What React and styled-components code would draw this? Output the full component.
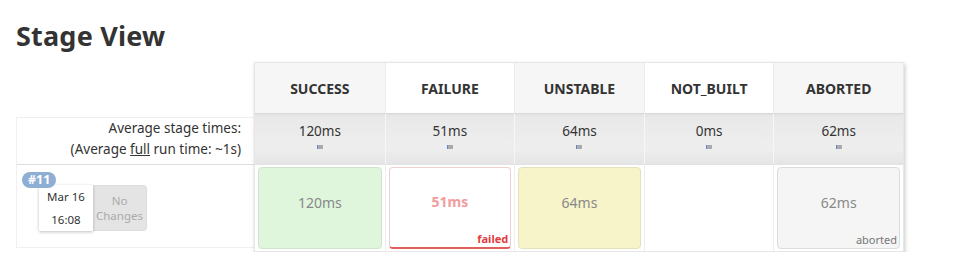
import React from "react";
import styled, { createGlobalStyle } from "styled-components";

const Global = createGlobalStyle`
  html, body { margin: 0; padding: 0; background: #fff; }
  body { font-family: "Noto Sans", "Open Sans", sans-serif; color: #333; }
`;

const Page = styled.div`
  padding: 20px 0 0 16px;
`;

const Title = styled.h1`
  margin: 0 0 10px 0;
  font-size: 27px;
  line-height: 32px;
  font-weight: 700;
  color: #333;
  letter-spacing: 0.2px;
`;

const Layout = styled.div`
  display: flex;
  align-items: flex-start;
`;

const LeftCol = styled.div`
  width: 238px;
  padding-top: 55px;
  flex-shrink: 0;
`;

const LeftBox = styled.div`
  border: 1px solid #f0f0f0;
  border-right: none;
`;

const Averages = styled.div`
  height: 46px;
  padding-right: 13px;
  text-align: right;
  font-size: 13.5px;
  line-height: 21px;
  color: #333;
  border-bottom: 1px solid #ddd;
`;

const Full = styled.span`
  text-decoration: underline;
`;

const BuildRow = styled.div`
  height: 82px;
  position: relative;
  padding: 20px 0 0 22px;
  box-sizing: border-box;
`;

const Badge = styled.span`
  position: absolute;
  left: 5px;
  top: 7px;
  z-index: 2;
  background: #8eaed3;
  color: #fff;
  font-weight: 700;
  font-size: 12.5px;
  line-height: 16px;
  padding: 0 6px;
  border-radius: 8px;
`;

const BuildCard = styled.div`
  display: flex;
`;

const DateBox = styled.div`
  width: 54px;
  height: 46px;
  background: #fff;
  box-shadow: 0 1px 3px rgba(0, 0, 0, 0.25);
  display: flex;
  flex-direction: column;
  justify-content: space-around;
  align-items: center;
  font-size: 11.5px;
  color: #333;
  position: relative;
  z-index: 1;
`;

const Changes = styled.div`
  width: 54px;
  height: 46px;
  background: #e4e4e4;
  border: 1px solid #ddd;
  border-left: none;
  border-radius: 0 4px 4px 0;
  box-sizing: border-box;
  display: flex;
  align-items: center;
  justify-content: center;
  text-align: center;
  font-size: 11.5px;
  line-height: 15px;
  color: #aaa;
`;

const Table = styled.div`
  display: grid;
  width: 650px;
  box-sizing: border-box;
  grid-template-columns: repeat(5, 1fr);
  grid-template-rows: 50px 51px 87px;
  border: 1px solid #e6e6e6;
  box-shadow: 1px 2px 4px rgba(0, 0, 0, 0.22);
  background: #fff;
`;

const Head = styled.div`
  background: ${(p) => (p.$alt ? "#f6f6f6" : "#fff")};
  border-left: ${(p) => (p.$first ? "none" : "1px solid #ececec")};
  display: flex;
  align-items: center;
  justify-content: center;
  font-weight: 700;
  font-size: 14px;
  color: #333;
`;

const Avg = styled.div`
  background: linear-gradient(#e1e1e1 0, #e9e9e9 3px, #eeeeee 70%, #e5e5e5 100%);
  border-top: 1px solid #d8d8d8;
  border-left: ${(p) => (p.$first ? "none" : "1px solid #f6f6f6")};
  display: flex;
  flex-direction: column;
  align-items: center;
  padding-top: 7px;
  font-size: 13.5px;
  line-height: 20px;
  color: #333;
`;

const Mark = styled.span`
  display: block;
  width: 5px;
  height: 4px;
  margin-top: 4px;
  background: #aaa;
  border-left: 1px solid #5b8ad8;
`;

const CellWrap = styled.div`
  border-top: 1px solid #e2e2e2;
  border-left: ${(p) => (p.$first ? "none" : "1px solid #eee")};
  padding: 2px 3px 2px 3px;
  background: #fff;
`;

const palette = {
  success: { bg: "#dff6dd", border: "#cfe4cc", color: "#888", bottom: "#cfe4cc" },
  failure: { bg: "#fff", border: "#f0cfcf", color: "#f29d9d", bottom: "#e25c5c", bold: true },
  unstable: { bg: "#f6f4c8", border: "#e4e2ba", color: "#888", bottom: "#e4e2ba" },
  aborted: { bg: "#f5f5f5", border: "#dcdcdc", color: "#888", bottom: "#dcdcdc" },
};

const Cell = styled.div`
  position: relative;
  height: 100%;
  box-sizing: border-box;
  border-radius: 4px;
  background: ${(p) => palette[p.$kind].bg};
  border: 1px solid ${(p) => palette[p.$kind].border};
  border-bottom: ${(p) => (p.$kind === "failure" ? "2px" : "1px")} solid
    ${(p) => palette[p.$kind].bottom};
  display: flex;
  align-items: center;
  justify-content: center;
  font-size: 14px;
  color: ${(p) => palette[p.$kind].color};
  font-weight: ${(p) => (palette[p.$kind].bold ? 700 : 400)};
  padding-bottom: 12px;
`;

const Status = styled.span`
  position: absolute;
  right: 2px;
  bottom: 1px;
  font-size: 11px;
  line-height: 14px;
  font-weight: ${(p) => (p.$strong ? 700 : 400)};
  color: ${(p) => (p.$strong ? "#e23b3e" : "#777")};
`;

const stages = [
  { name: "SUCCESS", avg: "120ms", kind: "success", time: "120ms" },
  { name: "FAILURE", avg: "51ms", kind: "failure", time: "51ms", label: "failed" },
  { name: "UNSTABLE", avg: "64ms", kind: "unstable", time: "64ms" },
  { name: "NOT_BUILT", avg: "0ms", kind: null },
  { name: "ABORTED", avg: "62ms", kind: "aborted", time: "62ms", label: "aborted" },
];

export default function App() {
  return (
    <Page>
      <Global />
      <Title>Stage View</Title>
      <Layout>
        <LeftCol>
          <LeftBox>
            <Averages>
              Average stage times:
              <br />
              (Average <Full>full</Full> run time: ~1s)
            </Averages>
            <BuildRow>
              <Badge>#11</Badge>
              <BuildCard>
                <DateBox>
                  <span>Mar 16</span>
                  <span>16:08</span>
                </DateBox>
                <Changes>
                  No
                  <br />
                  Changes
                </Changes>
              </BuildCard>
            </BuildRow>
          </LeftBox>
        </LeftCol>
        <Table>
          {stages.map((s, i) => (
            <Head key={"h" + i} $alt={i % 2 === 0} $first={i === 0}>
              {s.name}
            </Head>
          ))}
          {stages.map((s, i) => (
            <Avg key={"a" + i} $first={i === 0}>
              {s.avg}
              <Mark />
            </Avg>
          ))}
          {stages.map((s, i) => (
            <CellWrap key={"c" + i} $first={i === 0}>
              {s.kind && (
                <Cell $kind={s.kind}>
                  {s.time}
                  {s.label && (
                    <Status $strong={s.kind === "failure"}>{s.label}</Status>
                  )}
                </Cell>
              )}
            </CellWrap>
          ))}
        </Table>
      </Layout>
    </Page>
  );
}
